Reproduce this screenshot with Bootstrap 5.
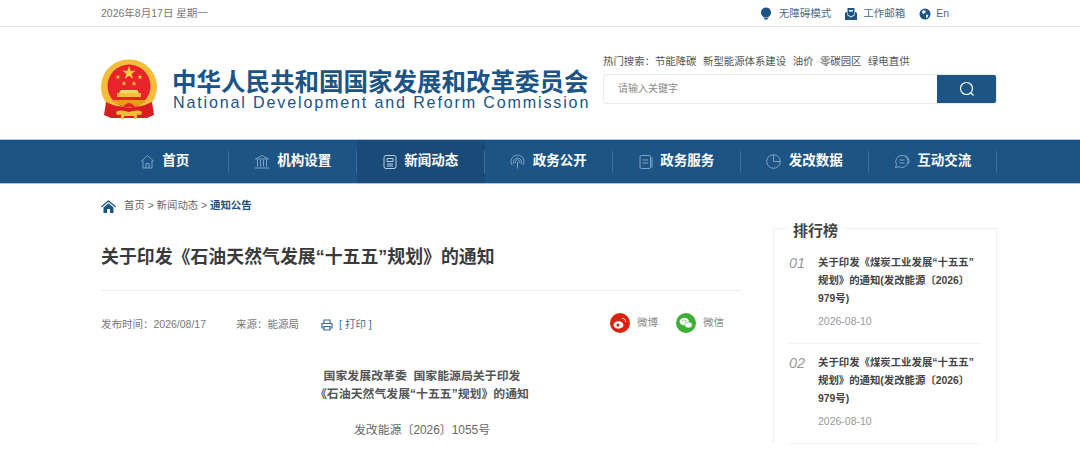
<!DOCTYPE html>
<html lang="zh-CN">
<head>
<meta charset="utf-8">
<title>关于印发《石油天然气发展“十五五”规划》的通知</title>
<link href="https://cdn.jsdelivr.net/npm/bootstrap@5.3.0/dist/css/bootstrap.min.css" rel="stylesheet">
<style>
html,body{overflow:hidden;height:450px}
body{font-family:"Liberation Sans","Noto Sans CJK SC",sans-serif;color:#333;background:#fff;font-size:11px}
.wrap-w{width:896px;margin-left:101px}
.topline{height:27px;border-bottom:1px solid #e3e5e8}
.topline .wrap-w{height:26px;padding-top:1px}
.date-txt{color:#777;font-size:10.5px}
.tool-link{color:#4a6a88;font-size:10.5px;text-decoration:none;display:flex;align-items:center;gap:7px}
.tool-mail{gap:6px}
.tool-lang{gap:5px}
.tools{gap:14px;margin-right:48px}
.head-box{height:112px}
.logo-wrap{width:489px;padding-top:32px;gap:12px}
.brand-cn{font-size:24.5px;font-weight:700;color:#1c5485;line-height:22px;white-space:nowrap;padding-top:13px;margin-left:-1px}
.brand-en{font-size:16.1px;color:#1c5485;line-height:16px;letter-spacing:1.84px;white-space:nowrap}
.find-wrap{width:394px;margin-left:13px;padding-top:27px}
.hot-row{font-size:10.4px;color:#555;line-height:16px;gap:6.5px;margin-bottom:4px;white-space:nowrap}
.find-box{height:30px;border:1px solid #e8eaed;border-radius:3px;overflow:hidden}
.find-input{flex:1;border:0;padding:0 14px;font-size:10px;color:#888;line-height:28px}
.find-btn{width:59px;background:#1c5485;display:flex;align-items:center;justify-content:center}
.main-nav{height:45px;background:#1c5485;border-top:1px solid #a9c6e0;border-bottom:1px solid #a9c6e0}
.nav-cell{width:128px;height:43px;display:flex;align-items:center;justify-content:center;gap:7.5px;padding-right:1px;color:#fff;font-size:13.5px;font-weight:700;position:relative;text-decoration:none}
.nav-cell::after{content:"";position:absolute;right:0;top:11px;height:22px;width:1px;background:#3b6f9c}
.nav-on{background:#194a78}
.crumb-row{height:44px;gap:8px;font-size:10.4px;color:#666}
.crumb-now{color:#1c5485;font-weight:700}
.page-row{gap:32px}
.main-col{width:640px}
.art-title{font-size:17.9px;font-weight:700;color:#3a3a3a;line-height:26px;margin:0;padding-top:16px;height:63px;border-bottom:1px solid #eeeeee}
.meta-row{height:67px;padding-top:1px;font-size:10.5px;color:#777}
.meta-gap{gap:22px}
.meta-first{margin-right:8px}
.print-txt{color:#3f6a90;gap:6px}
.share-txt{color:#888;font-size:10.5px;gap:7px}
.share-gap{gap:18px;margin-right:17px;margin-top:-4px}
.art-body{text-align:center;font-size:11.9px;color:#444;line-height:18px;padding:9px 0 0 2px}
.art-head{font-weight:700;color:#555;margin-bottom:18px}
.art-no{color:#666}
.rank-col{width:224px;margin-top:-6px}
.rank-box{border:1px solid #f0f0f0;border-bottom:0;position:relative;padding:25px 16px 0 15px;margin-top:6px}
.rank-title{position:absolute;left:13px;top:-9px;background:#fff;padding:0 6px;font-size:15px;font-weight:700;color:#444;line-height:22px}
.rank-item{display:flex;gap:13px;height:90px;border-bottom:1px solid #f3f3f3;margin-bottom:10px}
.rank-num{font-size:14.5px;font-style:italic;color:#999;width:16px;line-height:24px;flex:none;margin-top:-3px}
.rank-txt{font-size:10.4px;font-weight:700;color:#444;line-height:18px;white-space:nowrap}
.rank-date{font-weight:400;font-size:10.5px;color:#999;margin-top:4px;line-height:18px}
.ico{flex:none;display:block}
</style>
</head>
<body>
<div class="topline">
  <div class="wrap-w d-flex justify-content-between align-items-center">
    <span class="date-txt">2026年8月17日 星期一</span>
    <div class="d-flex tools">
      <a class="tool-link" href="#"><svg class="ico" width="12" height="13" viewBox="0 0 12 13"><path fill="#1c5485" d="M6 .5a5 5 0 0 1 3 9c-.4.3-.5.6-.5 1H3.500c0-.4-.1-.7-.5-1a5 5 0 0 1 3-9z"/><rect x="4" y="11" width="4" height="1.600" rx=".8" fill="#1c5485"/></svg>无障碍模式</a>
      <a class="tool-link tool-mail" href="#"><svg class="ico" width="12" height="12" viewBox="0 0 12 12"><path fill="#1c5485" d="M0 5 2 3.800V7l4 2.500L10 7V3.800L12 5v7H0z"/><path fill="#1c5485" d="M2.500 0h7v6.500L6 8.500l-3.500-2z"/><path fill="#fff" d="M4 2h4v1.500H4z"/></svg>工作邮箱</a>
      <a class="tool-link tool-lang" href="#"><svg class="ico" width="12" height="12" viewBox="0 0 12 12"><circle cx="6" cy="6" r="5.500" fill="#1c5485"/><path fill="#fff" d="M4 2 7 3 6 5 4 6 3 4zM7 6.500l2.500.5L8 10l-1-.5z"/></svg>En</a>
    </div>
  </div>
</div>

<div class="wrap-w head-box d-flex">
  <div class="logo-wrap d-flex">
    <svg class="ico" width="60" height="62" viewBox="0 0 60 62">
      <defs><polygon id="st" points="0,-1 .225,-.309 .951,-.309 .363,.118 .588,.809 0,.382 -.588,.809 -.363,.118 -.951,-.309 -.225,-.309"/></defs>
      <path fill="#f4bd3a" d="M28 .5C44 .5 56 13 56 28c0 7-3 13-6 17l-22 6-22-6C3 41 0 35 0 28 0 13 12 .5 28 .5z"/>
      <circle cx="28" cy="27" r="21.500" fill="#e8242a"/>
      <g fill="#fbd33f">
        <use href="#st" transform="translate(28 14) scale(7)"/>
        <use href="#st" transform="translate(17 18) scale(2.700)"/>
        <use href="#st" transform="translate(39 18) scale(2.700)"/>
        <use href="#st" transform="translate(23 24.500) scale(2.700)"/>
        <use href="#st" transform="translate(33 24.500) scale(2.700)"/>
      </g>
      <path fill="#f8d866" d="M20 31h16l2 3H18z"/>
      <path fill="#f4bd3a" d="M16 34h24v4H16z"/>
      <path fill="#f09a20" d="M11 41h34l-2 3c-4 2-7 1-9 4-2-3-4-4-6-4s-4 1-6 4c-2-3-5-2-9-4z"/>
      <path fill="#d81e22" d="M5 43l7 3c5 2 10 1 16 3 6-2 11-1 16-3l7-3 2 13-7 3H10l-7-3z"/>
      <path fill="#f4bd3a" d="M15 53c4-3 9-1 13 0 4-1 9-3 13 0l-1 3-4-.5V60h-3v-3H23v3h-3v-4.500l-4 .5z"/>
    </svg>
    <div>
      <div class="brand-cn">中华人民共和国国家发展和改革委员会</div>
      <div class="brand-en">National Development and Reform Commission</div>
    </div>
  </div>
  <div class="find-wrap">
    <div class="hot-row d-flex"><span>热门搜索：节能降碳</span><span>新型能源体系建设</span><span>油价</span><span>零碳园区</span><span>绿电直供</span></div>
    <div class="find-box d-flex">
      <div class="find-input">请输入关键字</div>
      <div class="find-btn"><svg width="16" height="16" viewBox="0 0 16 16" fill="none" stroke="#fff" stroke-width="1.200"><circle cx="7.500" cy="7.500" r="6"/><path d="M12 12l2.500 2.500"/></svg></div>
    </div>
  </div>
</div>

<div class="main-nav">
  <div class="wrap-w d-flex">
    <a class="nav-cell" href="#"><svg class="ico" width="15" height="15" viewBox="0 0 15 15" fill="none" stroke="#7fa3c4"><path d="M1 7.500 7.500 1.500 14 7.500M3 6.500V14h9V6.500M6 14V9.500h3V14"/></svg>首页</a>
    <a class="nav-cell" href="#"><svg class="ico" width="16" height="15" viewBox="0 0 16 15" fill="none" stroke="#7fa3c4"><path d="M1.500 5 8 1.500 14.500 5zM3.500 6v6.500M6.500 6v6.500M9.500 6v6.500M12.500 6v6.500M1 14h14"/></svg>机构设置</a>
    <a class="nav-cell nav-on" href="#"><svg class="ico" width="14" height="14" viewBox="0 0 14 14" fill="none" stroke="#b9cfe2"><rect x="1" y=".5" width="12" height="13" rx="2"/><path d="M4 3.500h6v3H4zM4 9h6M4 11h6"/></svg>新闻动态</a>
    <a class="nav-cell" href="#"><svg class="ico" width="15" height="15" viewBox="0 0 15 15" fill="none" stroke="#7fa3c4"><path d="M2 11A6.500 6.500 0 1 1 13 11M4 10a4 4 0 1 1 7 0M6 9a2 2 0 1 1 3 0M7.500 8v6.500"/></svg>政务公开</a>
    <a class="nav-cell" href="#"><svg class="ico" width="14" height="14" viewBox="0 0 14 14" fill="none" stroke="#7fa3c4"><rect x="1" y=".5" width="10.500" height="13" rx="1.500"/><path d="M3.500 5h5.500M3.500 8h5.500M13 2v10.500"/></svg>政务服务</a>
    <a class="nav-cell" href="#"><svg class="ico" width="15" height="15" viewBox="0 0 15 15" fill="none" stroke="#7fa3c4"><circle cx="7.500" cy="7.500" r="6.800"/><path d="M7.500 .7v6.800h6.800"/></svg>发改数据</a>
    <a class="nav-cell" href="#"><svg class="ico" width="16" height="15" viewBox="0 0 16 15" fill="none" stroke="#7fa3c4"><path d="M8 1.500a6 6 0 1 1-3 11.200L1.500 13.500l1-3A6 6 0 0 1 8 1.500z"/><path d="M5.500 6h5M5.500 9h5M11 1.500a6 6 0 0 1 3.500 8"/></svg>互动交流</a>
  </div>
</div>

<div class="wrap-w">
  <div class="crumb-row d-flex align-items-center">
    <svg class="ico" width="15" height="13" viewBox="0 0 15 13"><path fill="#1c5485" d="M7.500 0 15 6.500l-.8.9L7.500 1.800.8 7.400 0 6.500zM2.500 7.500l5-4.200 5 4.200V13H9V9H6v4H2.500z"/></svg>
    <span>首页 &gt; 新闻动态 &gt; <span class="crumb-now">通知公告</span></span>
  </div>
  <div class="page-row d-flex">
    <div class="main-col">
      <h1 class="art-title">关于印发《石油天然气发展“十五五”规划》的通知</h1>
      <div class="meta-row d-flex justify-content-between align-items-center">
        <div class="d-flex meta-gap align-items-center">
          <span class="meta-first">发布时间：2026/08/17</span>
          <span>来源：能源局</span>
          <span class="d-flex align-items-center print-txt"><svg class="ico" width="12" height="12" viewBox="0 0 12 12" fill="none" stroke="#3f6a90" stroke-width="1.200"><path d="M3 4V1h6v3M3 9H1V4.500h10V9H9M3 7.500h6V11H3z"/></svg>[ 打印 ]</span>
        </div>
        <div class="d-flex share-gap align-items-center">
          <span class="d-flex align-items-center share-txt"><svg class="ico" width="20" height="20" viewBox="0 0 20 20"><circle cx="10" cy="10" r="10" fill="#d9230f"/><ellipse cx="8.500" cy="12" rx="5" ry="3.700" fill="#fff"/><circle cx="8" cy="12" r="1.600" fill="#d9230f"/><path d="M12 5.500a3 3 0 0 1 3.500 3.500" fill="none" stroke="#fff"/></svg>微博</span>
          <span class="d-flex align-items-center share-txt"><svg class="ico" width="20" height="20" viewBox="0 0 20 20"><circle cx="10" cy="10" r="10" fill="#3cb034"/><ellipse cx="8.300" cy="8.600" rx="4.700" ry="3.800" fill="#fff"/><ellipse cx="12.500" cy="12" rx="3.800" ry="3" fill="#fff" stroke="#3cb034" stroke-width=".6"/><circle cx="6.800" cy="7.700" r=".6" fill="#3cb034"/><circle cx="9.600" cy="7.700" r=".6" fill="#3cb034"/></svg>微信</span>
        </div>
      </div>
      <div class="art-body">
        <div class="art-head">国家发展改革委&nbsp; 国家能源局关于印发<br>《石油天然气发展“十五五”规划》的通知</div>
        <div class="art-no">发改能源〔2026〕1055号</div>
      </div>
    </div>
    <aside class="rank-col">
      <div class="rank-box">
        <div class="rank-title">排行榜</div>
        <div class="rank-item">
          <span class="rank-num">01</span>
          <div class="rank-txt">关于印发《煤炭工业发展“十五五”<br>规划》的通知(发改能源〔2026〕<br>979号)<div class="rank-date">2026-08-10</div></div>
        </div>
        <div class="rank-item">
          <span class="rank-num">02</span>
          <div class="rank-txt">关于印发《煤炭工业发展“十五五”<br>规划》的通知(发改能源〔2026〕<br>979号)<div class="rank-date">2026-08-10</div></div>
        </div>
      </div>
    </aside>
  </div>
</div>
</body>
</html>
